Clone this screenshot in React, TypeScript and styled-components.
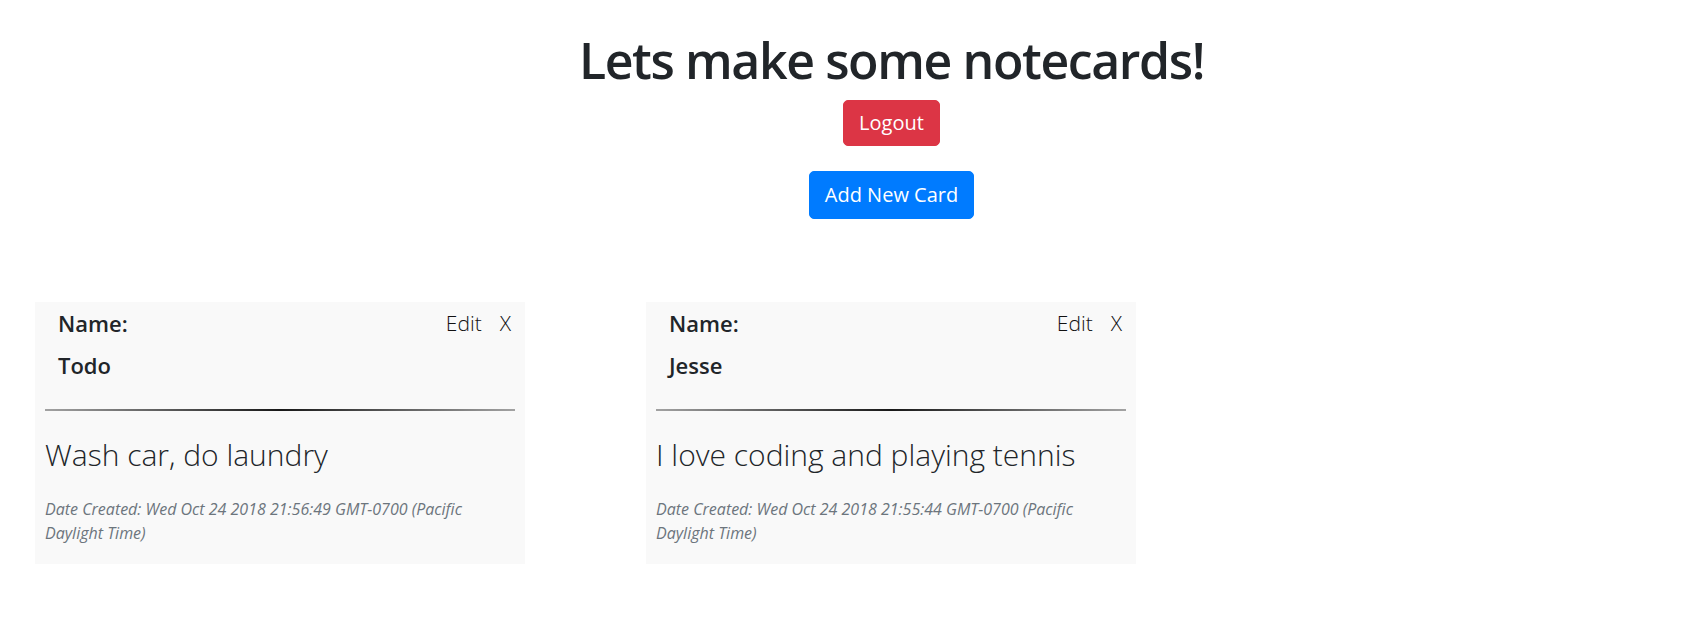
import React from "react";
import styled, { createGlobalStyle } from "styled-components";

const GlobalStyle = createGlobalStyle`
  html, body { margin: 0; padding: 0; background: #ffffff; }
  body {
    font-family: "Open Sans", "Noto Sans", "Liberation Sans", sans-serif;
    color: #212529;
    font-size: 20px;
  }
  * { box-sizing: border-box; }
`;

const Page = styled.div`
  width: 1699px;
  min-height: 635px;
  padding-top: 30px;
`;

const Header = styled.header`
  display: flex;
  flex-direction: column;
  align-items: center;
  padding-left: 84px;
`;

const Title = styled.h1`
  margin: 0 0 10px;
  font-size: 50px;
  font-weight: 550;
  letter-spacing: -1.4px;
  line-height: 1.2;
  color: #212529;
`;

const Button = styled.button<{ $variant: "danger" | "primary"; $gap?: number; $tall?: boolean }>`
  margin-top: ${(p) => p.$gap ?? 0}px;
  font-family: inherit;
  font-size: 20px;
  line-height: 30px;
  padding: ${(p) => (p.$tall ? "8px 15px" : "7px 15px")};
  border-radius: 5px;
  border: 1px solid ${(p) => (p.$variant === "danger" ? "#dc3545" : "#007bff")};
  background: ${(p) => (p.$variant === "danger" ? "#dc3545" : "#007bff")};
  color: #ffffff;
  cursor: pointer;
`;

const CardRow = styled.section`
  display: flex;
  gap: 121px;
  padding-left: 35px;
  margin-top: 83px;
`;

const Card = styled.article`
  width: 490px;
  background: #f9f9f9;
  padding: 8px 10px 19px;
`;

const CardHeader = styled.div`
  display: flex;
  justify-content: space-between;
  align-items: flex-start;
  padding: 0 4px 0 13px;
`;

const NameBlock = styled.div`
  display: flex;
  flex-direction: column;
  gap: 16px;
`;

const NameLine = styled.div`
  font-size: 22px;
  font-weight: 600;
  line-height: 1.2;
  color: #212529;
`;

const Actions = styled.div`
  display: flex;
  gap: 18px;
  font-size: 21px;
  font-weight: 300;
  line-height: 1.2;
  padding-top: 1px;
  color: #111111;
`;

const Action = styled.span`
  cursor: pointer;
`;

const Divider = styled.hr`
  border: 0;
  height: 2px;
  margin: 30px 0 26px;
  background-image: linear-gradient(
    to right,
    rgba(0, 0, 0, 0.35),
    rgba(0, 0, 0, 0.9),
    rgba(0, 0, 0, 0.35)
  );
`;

const Body = styled.p`
  margin: 0 0 24px;
  font-size: 30px;
  font-weight: 300;
  line-height: 1.2;
  color: #212529;
`;

const DateText = styled.p`
  margin: 0;
  font-size: 16px;
  font-style: italic;
  line-height: 24px;
  color: #6c757d;
`;

const cards = [
  {
    name: "Todo",
    body: "Wash car, do laundry",
    date: "Wed Oct 24 2018 21:56:49 GMT-0700 (Pacific Daylight Time)",
  },
  {
    name: "Jesse",
    body: "I love coding and playing tennis",
    date: "Wed Oct 24 2018 21:55:44 GMT-0700 (Pacific Daylight Time)",
  },
];

export default function App() {
  return (
    <Page>
      <GlobalStyle />
      <Header>
        <Title>Lets make some notecards!</Title>
        <Button $variant="danger">Logout</Button>
        <Button $variant="primary" $gap={25} $tall>
          Add New Card
        </Button>
      </Header>
      <CardRow>
        {cards.map((c) => (
          <Card key={c.name}>
            <CardHeader>
              <NameBlock>
                <NameLine>Name:</NameLine>
                <NameLine>{c.name}</NameLine>
              </NameBlock>
              <Actions>
                <Action>Edit</Action>
                <Action>X</Action>
              </Actions>
            </CardHeader>
            <Divider />
            <Body>{c.body}</Body>
            <DateText>Date Created: {c.date}</DateText>
          </Card>
        ))}
      </CardRow>
    </Page>
  );
}
